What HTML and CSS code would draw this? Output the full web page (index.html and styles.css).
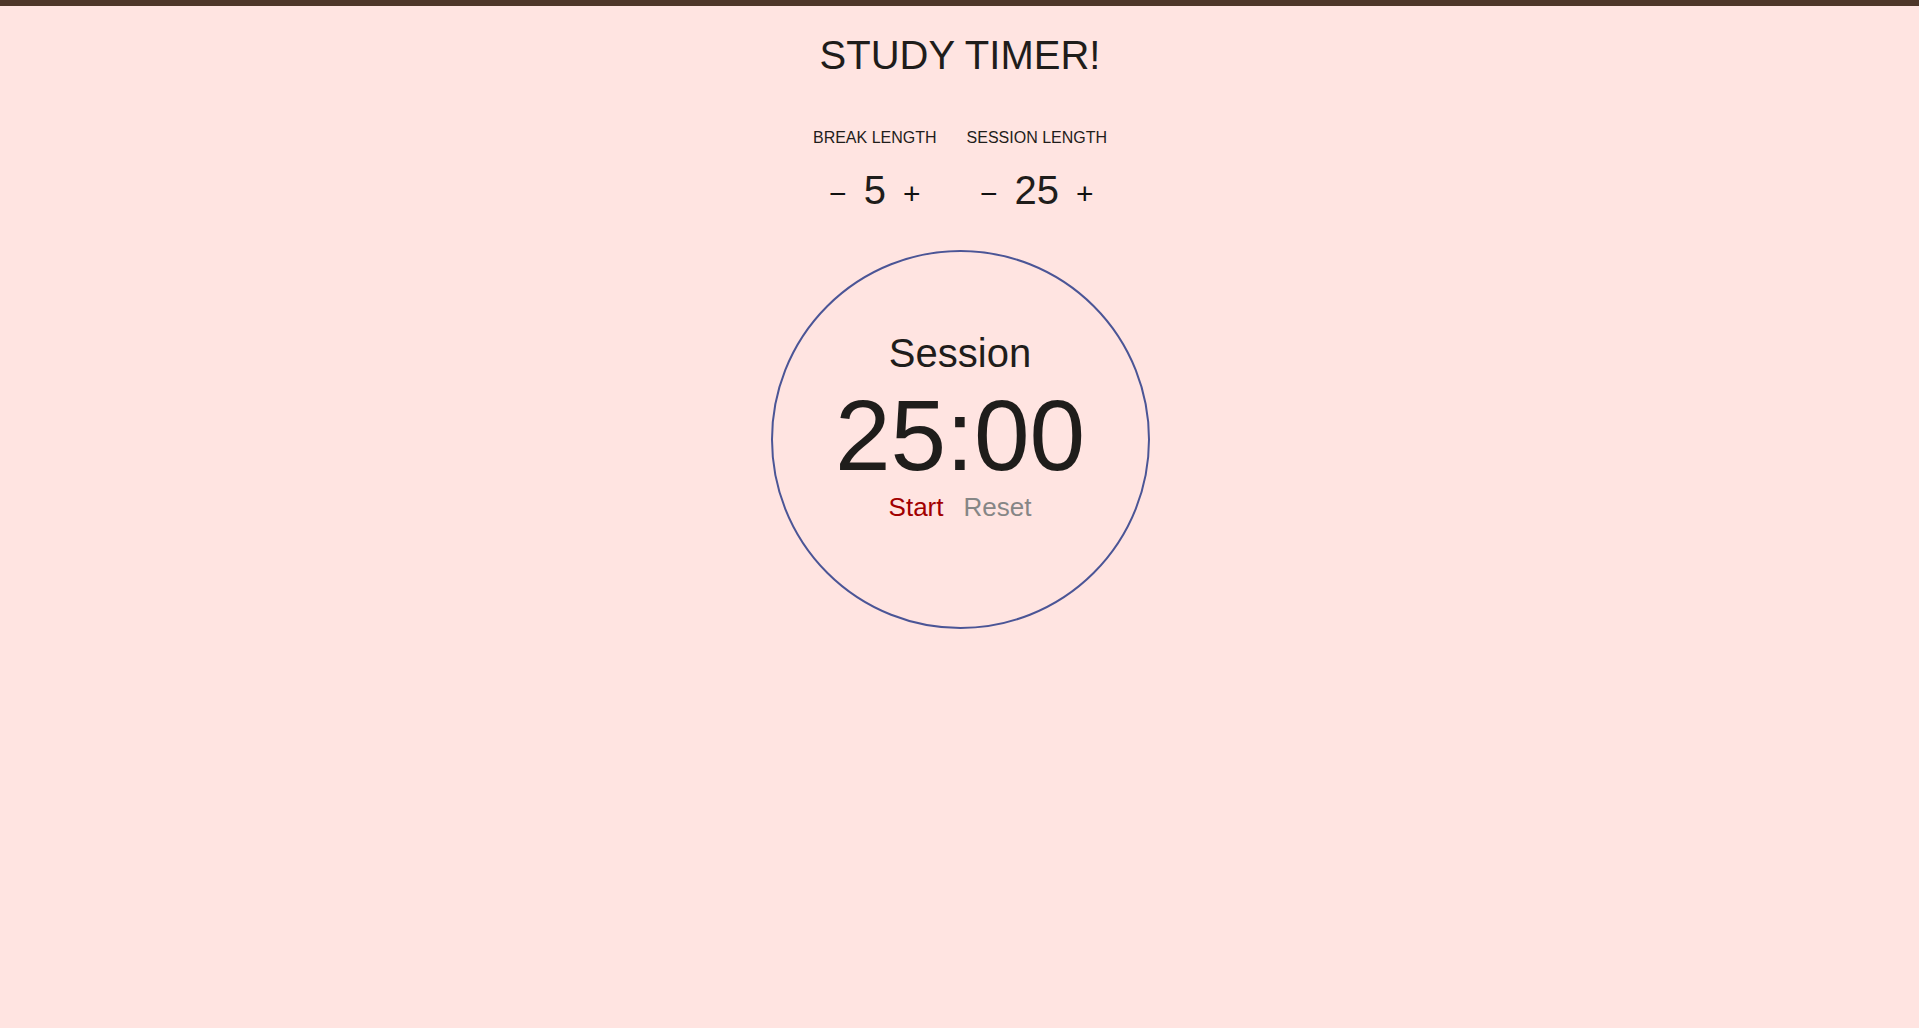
FILE: index.html
```html
<!DOCTYPE html>
<html lang="en">
<head>
<meta charset="utf-8">
<title>Study Timer</title>
<link rel="stylesheet" href="styles.css">
</head>
<body>
<main class="app">
  <h1 class="title">STUDY TIMER!</h1>
  <section class="settings">
    <div class="setting">
      <div class="setting-label">BREAK LENGTH</div>
      <div class="setting-row">
        <button class="step">&minus;</button>
        <span class="setting-value">5</span>
        <button class="step">+</button>
      </div>
    </div>
    <div class="setting">
      <div class="setting-label">SESSION LENGTH</div>
      <div class="setting-row">
        <button class="step">&minus;</button>
        <span class="setting-value">25</span>
        <button class="step">+</button>
      </div>
    </div>
  </section>
  <section class="clock">
    <div class="clock-label">Session</div>
    <div class="clock-time">25:00</div>
    <div class="clock-controls">
      <button class="ctrl ctrl-start">Start</button>
      <button class="ctrl ctrl-reset">Reset</button>
    </div>
  </section>
</main>
</body>
</html>
```

FILE: styles.css
```css
html, body {
  margin: 0;
  padding: 0;
}

body {
  background: #ffe4e1;
  border-top: 6px solid #4e3629;
  min-height: 1022px;
  font-family: "Liberation Sans", Arial, sans-serif;
  color: #1f1d1b;
}

.app {
  display: flex;
  flex-direction: column;
  align-items: center;
  padding-left: 1px;
}

.title {
  margin: 26px 0 0;
  font-size: 40px;
  font-weight: normal;
  line-height: 46px;
}

.settings {
  display: flex;
  gap: 30px;
  margin-top: 51px;
}

.setting {
  display: flex;
  flex-direction: column;
  align-items: center;
}

.setting-label {
  font-size: 16px;
  line-height: 18px;
}

.setting-row {
  display: flex;
  align-items: baseline;
  gap: 17px;
  margin-top: 20px;
}

.setting-value {
  font-size: 40px;
  line-height: 46px;
}

.step {
  background: none;
  border: none;
  padding: 0;
  margin: 0;
  font-family: "Liberation Sans", Arial, sans-serif;
  font-size: 30px;
  color: #111;
  cursor: pointer;
}

.clock {
  margin-top: 37px;
  width: 375px;
  height: 375px;
  border: 2px solid #4b5596;
  border-radius: 50%;
  display: flex;
  flex-direction: column;
  align-items: center;
  box-sizing: content-box;
}

.clock-label {
  margin-top: 78px;
  font-size: 40px;
  line-height: 46px;
}

.clock-time {
  margin-top: 2px;
  font-size: 100px;
  line-height: 114px;
}

.clock-controls {
  display: flex;
  gap: 20px;
}

.ctrl {
  background: none;
  border: none;
  padding: 0;
  margin: 0;
  font-family: "Liberation Sans", Arial, sans-serif;
  font-size: 26px;
  line-height: 30px;
  cursor: pointer;
}

.ctrl-start {
  color: #a20000;
}

.ctrl-reset {
  color: #868686;
}
```
